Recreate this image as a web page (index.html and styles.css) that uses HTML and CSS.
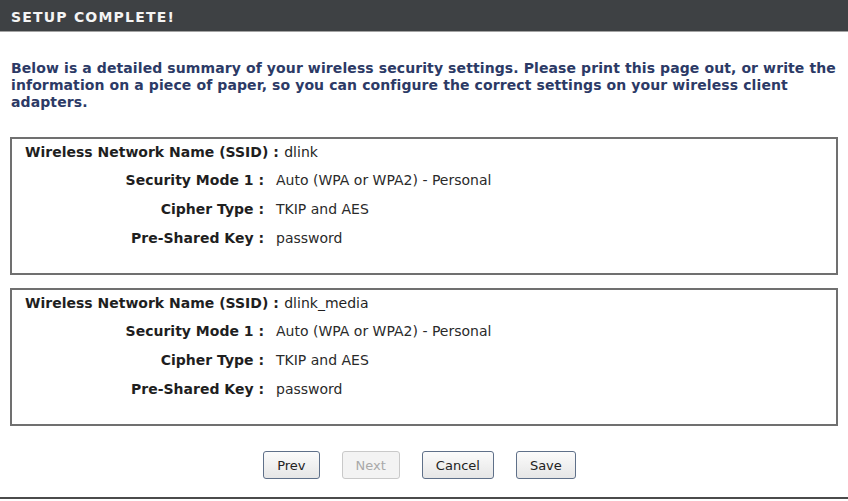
FILE: index.html
```html
<!DOCTYPE html>
<html lang="en">
<head>
    <meta charset="UTF-8">
    <title>Setup Complete</title>
    <link rel="stylesheet" href="styles.css">
</head>
<body>
    <div class="page">
        <h1 class="title">SETUP COMPLETE!</h1>
        <p class="intro">Below is a detailed summary of your wireless security settings. Please print this page out, or write the information on a piece of paper, so you can configure the correct settings on your wireless client adapters.</p>

        <div class="box">
            <div class="ssid"><b>Wireless Network Name (SSID) :</b> dlink</div>
            <table class="summary">
                <tr><td class="label">Security Mode 1 :</td><td class="value">Auto (WPA or WPA2) - Personal</td></tr>
                <tr><td class="label">Cipher Type :</td><td class="value">TKIP and AES</td></tr>
                <tr><td class="label">Pre-Shared Key :</td><td class="value">password</td></tr>
            </table>
        </div>

        <div class="box">
            <div class="ssid"><b>Wireless Network Name (SSID) :</b> dlink_media</div>
            <table class="summary">
                <tr><td class="label">Security Mode 1 :</td><td class="value">Auto (WPA or WPA2) - Personal</td></tr>
                <tr><td class="label">Cipher Type :</td><td class="value">TKIP and AES</td></tr>
                <tr><td class="label">Pre-Shared Key :</td><td class="value">password</td></tr>
            </table>
        </div>

        <div class="buttons">
            <button class="btn">Prev</button>
            <button class="btn" disabled>Next</button>
            <button class="btn">Cancel</button>
            <button class="btn">Save</button>
        </div>
    </div>
</body>
</html>
```

FILE: styles.css
```css
body {
    margin: 0;
    font-family: "DejaVu Sans", sans-serif;
    background-color: #ffffff;
    color: #1f1f1f;
}

.page {
    height: 497px;
    border-bottom: 2px solid #4b4b4b;
}

.title {
    margin: 0;
    height: 31px;
    line-height: 34px;
    padding-left: 11px;
    background-color: #3e4144;
    border-bottom: 1px solid #a3a3a3;
    color: #f4f4f4;
    font-size: 14px;
    font-weight: bold;
    letter-spacing: 1.2px;
}

.intro {
    margin: 28px 4px 0 11px;
    color: #2c3a66;
    font-size: 14px;
    font-weight: bold;
    line-height: 17px;
    letter-spacing: 0.1px;
}

.box {
    margin: 26px 10px 0 10px;
    border: 2px solid #707070;
    padding-bottom: 21px;
    font-size: 14px;
}

.box + .box {
    margin-top: 13px;
}

.ssid {
    height: 26px;
    line-height: 26px;
    padding-left: 13px;
}

.ssid b {
    margin-right: 1px;
}

.summary {
    border-collapse: collapse;
}

.summary td {
    height: 29px;
    padding: 0;
}

.label {
    width: 252px;
    text-align: right;
    font-weight: bold;
}

.value {
    padding-left: 12px !important;
    color: #2a2a2a;
}

.buttons {
    display: flex;
    justify-content: center;
    gap: 22px;
    margin-top: 25px;
    padding-right: 9px;
}

.btn {
    height: 28px;
    min-width: 56px;
    padding: 0 13px;
    font-family: inherit;
    font-size: 13px;
    color: #222222;
    background: linear-gradient(#fbfbfb, #e6e6e6);
    border: 1px solid #5f7089;
    border-radius: 3px;
}

.btn:disabled {
    color: #a9a9a9;
    border-color: #c9c9c9;
    background: #f3f3f3;
}
```
